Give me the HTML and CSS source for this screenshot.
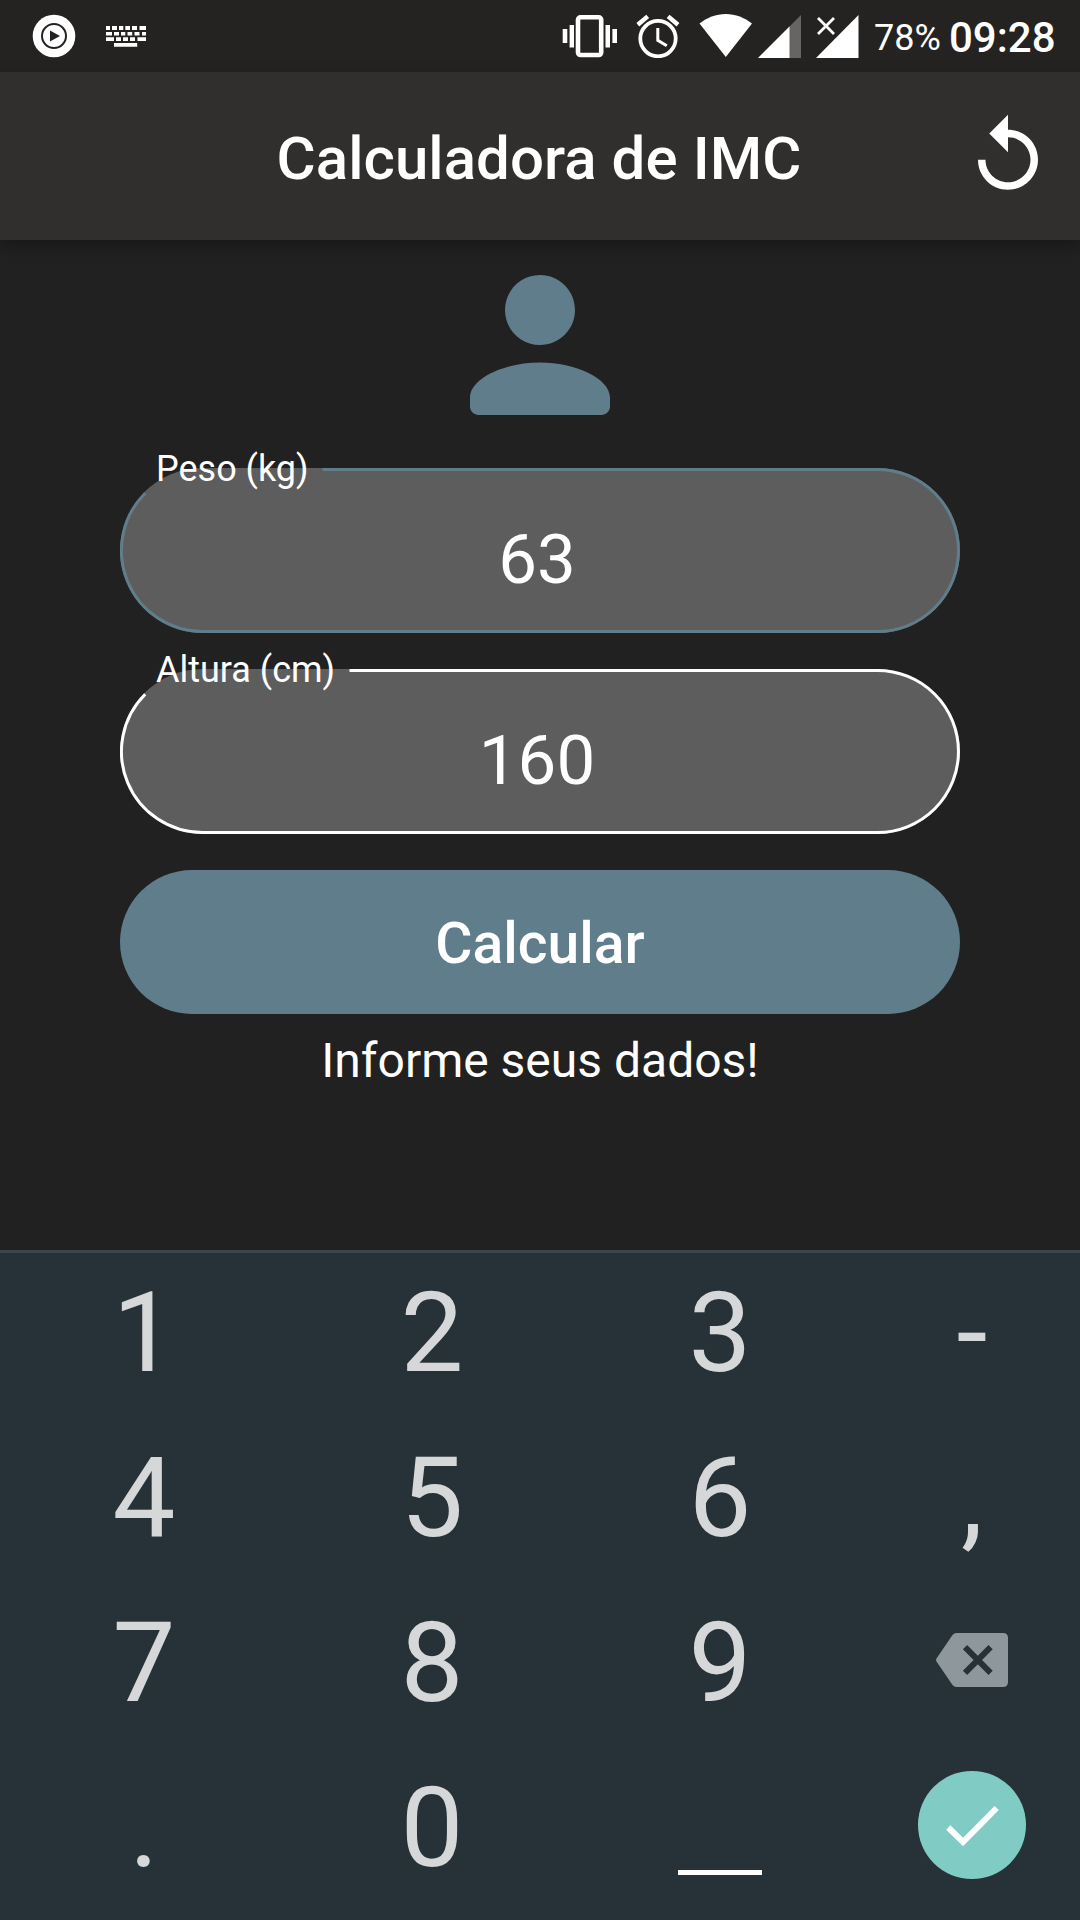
FILE: index.html
```html
<!DOCTYPE html>
<html lang="pt-BR">
<head>
<meta charset="utf-8">
<title>Calculadora de IMC</title>
<link rel="stylesheet" href="styles.css">
</head>
<body>
<div class="screen">
  <header class="status">
    <svg class="st-play" viewBox="0 0 44 44"><circle cx="22" cy="22" r="21.3" fill="#fff"/><circle cx="22" cy="22" r="12" fill="none" stroke="#242321" stroke-width="2"/><path d="M18 16.5v11l10-5.5z" fill="#242321"/></svg>
    <svg class="st-keys" viewBox="0 0 40 21" fill="#fff"><path d="M0 0h4v4H0zM6 0h5v4H6zM13 0h4.300v4H13zM19.300 0h4.700v4h-4.700zM26 0h5v4h-5zM33.500 0H40v4h-6.500zM0 6h6v3.500H0zM8 6h5v3.500H8zM15 6h4.300v3.500H15zM21.500 6h4.700v3.500h-4.700zM28.500 6h5v3.500h-5zM36 6h4v3.500h-4zM0 11.300h8v3.800H0zM10 11.300h5v3.800h-5zM17 11.300h5v3.800h-5zM24 11.300h5v3.800h-5zM31.500 11.300H40v3.800h-8.500zM8 17h23.200v3.800H8z"/></svg>
    <span class="status-spacer"></span>
    <svg class="st-vibrate" viewBox="0 0 56 44"><rect x="16" y="3.300" width="23.200" height="37.700" rx="2.500" fill="none" stroke="#fff" stroke-width="4.600"/><path d="M.7 15h4.600v14H.7zM7.600 11H12v22.500H7.600zM43.500 11H48v22.500h-4.500zM50.400 15H55v14h-4.600z" fill="#fff"/></svg>
    <svg class="st-alarm" viewBox="0 0 44 44" fill="none" stroke="#fff"><circle cx="22" cy="24.600" r="17.700" stroke-width="3.800"/><path d="M21.800 14v12.300l9 5.500" stroke-width="3"/><path d="M1.800 10.700 11.700 2.400M42 10.700 32.100 2.400" stroke-width="4.400"/></svg>
    <svg class="st-wifi" viewBox="0 0 54 44"><path d="M.5 9.600C8 3.500 17 0 26.800 0S45.500 3.500 53 9.600L26.800 43z" fill="#fff"/></svg>
    <svg class="st-signal" viewBox="0 0 43 43"><path d="M43 0v43H0z" fill="#fff" fill-opacity=".3"/><path d="M31.500 11.500V43H0z" fill="#fff"/></svg>
    <svg class="st-nosim" viewBox="0 0 43 43"><path d="M42.500 0v43H0z" fill="#fff"/><path d="M2 3l16 16M18 3 2 19" stroke="#242321" stroke-width="5"/><path d="M2 3l16 16M18 3 2 19" stroke="#fff" stroke-width="2.800"/></svg>
    <span class="battery">78%</span>
    <span class="clock">09:28</span>
  </header>
  <div class="appbar">
    <h1 class="title">Calculadora de IMC</h1>
    <svg class="replay" viewBox="0 0 24 24" fill="#fff"><path d="M12 5V1L7 6l5 5V7c3.310 0 6 2.690 6 6s-2.690 6-6 6-6-2.690-6-6H4c0 4.420 3.580 8 8 8s8-3.580 8-8-3.580-8-8-8z"/></svg>
  </div>
  <main class="form">
    <svg class="person" viewBox="0 0 24 24"><path d="M12 12c2.210 0 4-1.790 4-4s-1.790-4-4-4-4 1.790-4 4 1.790 4 4 4zm0 2c-4 0-8 1.800-8 4v1c0 .55.45 1 1 1h14c.55 0 1-.45 1-1v-1c0-2.200-4-4-8-4z"/></svg>
    <div class="field focused">
      <svg class="outline" viewBox="0 0 840 165"><path d="M25.200 25.200A81 81 0 0 0 82.500 163.500H757.500A81 81 0 0 0 757.500 1.500H202.500"/></svg>
      <label class="label">Peso (kg)</label>
      <span class="value">63</span>
    </div>
    <div class="field">
      <svg class="outline" viewBox="0 0 840 165"><path d="M25.200 25.200A81 81 0 0 0 82.500 163.500H757.500A81 81 0 0 0 757.500 1.500H229.500"/></svg>
      <label class="label">Altura (cm)</label>
      <span class="value">160</span>
    </div>
    <button class="submit">Calcular</button>
    <p class="info">Informe seus dados!</p>
  </main>
  <section class="keyboard">
    <span class="key">1</span><span class="key">2</span><span class="key">3</span><span class="key">-</span>
    <span class="key">4</span><span class="key">5</span><span class="key">6</span><span class="key">,</span>
    <span class="key">7</span><span class="key">8</span><span class="key">9</span>
    <span class="key icon"><svg class="backspace" viewBox="0 0 72 54"><path d="M20.500 0H67q5 0 5 5v44q0 5-5 5H20.500q-2.500 0-4-2L.5 28.500q-1-1.500 0-3L16.500 2q1.500-2 4-2z" fill="#8d979c"/><path d="M29 14.200 54.600 39.800M54.600 14.200 29 39.800" stroke="#273238" stroke-width="6"/></svg></span>
    <span class="key">.</span><span class="key">0</span>
    <span class="key icon"><i class="space"></i></span>
    <span class="key icon"><svg class="done" viewBox="0 0 108 108"><circle cx="54" cy="54" r="54" fill="#80cbc4"/><path d="M30.300 56.500 45 71 78.700 37" fill="none" stroke="#fff" stroke-width="6"/></svg></span>
  </section>
</div>
</body>
</html>
```
FILE: styles.css
```css
* { box-sizing: border-box; }
body {
  margin: 0;
  background: #212121;
  color: #fff;
  font-family: Roboto, "Liberation Sans", sans-serif;
}
svg { display: block; flex: none; }
.screen {
  width: 1080px;
  height: 1920px;
  display: flex;
  flex-direction: column;
  overflow: hidden;
}
.status {
  height: 72px;
  flex: none;
  display: flex;
  align-items: center;
  padding: 0 25px 0 32px;
  background: #242321;
}
.status-spacer { flex: 1; }
.st-play { width: 44px; height: 44px; }
.st-keys { width: 40px; height: 21px; margin-left: 30px; }
.st-vibrate { width: 56px; height: 44px; }
.st-alarm { width: 44px; height: 44px; margin-left: 18px; }
.st-wifi { width: 54px; height: 44px; margin-left: 19px; }
.st-signal { width: 43px; height: 43px; margin-left: 5px; }
.st-nosim { width: 43px; height: 43px; margin-left: 15px; }
.battery {
  width: 66px;
  margin-left: 15px;
  font-size: 36px;
  line-height: 72px;
  padding-top: 3px;
  white-space: nowrap;
}
.clock {
  width: 106px;
  margin-left: 9px;
  font-size: 42px;
  font-weight: 500;
  line-height: 72px;
  padding-top: 3px;
  white-space: nowrap;
}
.appbar {
  height: 168px;
  flex: none;
  display: grid;
  grid-template-columns: 90px 1fr 90px;
  align-items: center;
  padding: 0 27px;
  background: #302f2d;
  box-shadow: 0 6px 15px rgba(0, 0, 0, .3);
}
.title {
  grid-column: 2;
  margin: 0;
  padding: 6px 2px 0 0;
  font-size: 60px;
  font-weight: 500;
  letter-spacing: .06px;
  line-height: 70px;
  text-align: center;
}
.replay { width: 90px; height: 90px; }
.form {
  height: 1010px;
  flex: none;
  display: flex;
  flex-direction: column;
  padding: 0 120px;
}
.person {
  width: 210px;
  height: 210px;
  margin: 0 auto 18px;
  fill: #607d8b;
}
.field {
  position: relative;
  height: 165px;
  flex: none;
  margin-bottom: 36px;
  border-radius: 83px;
  background: #5d5d5d;
  display: flex;
  justify-content: center;
  align-items: center;
}
.outline {
  position: absolute;
  inset: 0;
  width: 840px;
  height: 165px;
  fill: none;
  stroke: #fff;
  stroke-width: 3;
}
.focused .outline { stroke: #607d8b; }
.label {
  position: absolute;
  left: 36px;
  top: -20px;
  font-size: 36px;
  line-height: 42px;
  white-space: nowrap;
}
.value {
  padding: 19px 6px 0 0;
  font-size: 69px;
  line-height: 80px;
}
.submit {
  height: 144px;
  flex: none;
  border: 0;
  border-radius: 72px;
  padding: 3px 0 0;
  background: #607d8b;
  color: #fff;
  font: 500 57px/70px Roboto, "Liberation Sans", sans-serif;
}
.info {
  margin: 19px 0 0;
  font-size: 48px;
  line-height: 56px;
  text-align: center;
}
.keyboard {
  position: relative;
  flex: 1;
  display: grid;
  grid-template-columns: 288px 288px 288px 216px;
  grid-template-rows: 160px 165px 165px 165px;
  align-items: end;
  background: #273238;
  box-shadow: inset 0 3px 0 #3b474d;
  color: #d6d7d9;
}
.key {
  height: 160px;
  padding-top: 5px;
  display: flex;
  justify-content: center;
  align-items: center;
  font-size: 112px;
  line-height: 132px;
}
.icon { padding: 0; }
.backspace { width: 72px; height: 54px; }
.done { width: 108px; height: 108px; }
.space {
  width: 84px;
  height: 5px;
  margin-top: 95px;
  background: #fff;
}
```
